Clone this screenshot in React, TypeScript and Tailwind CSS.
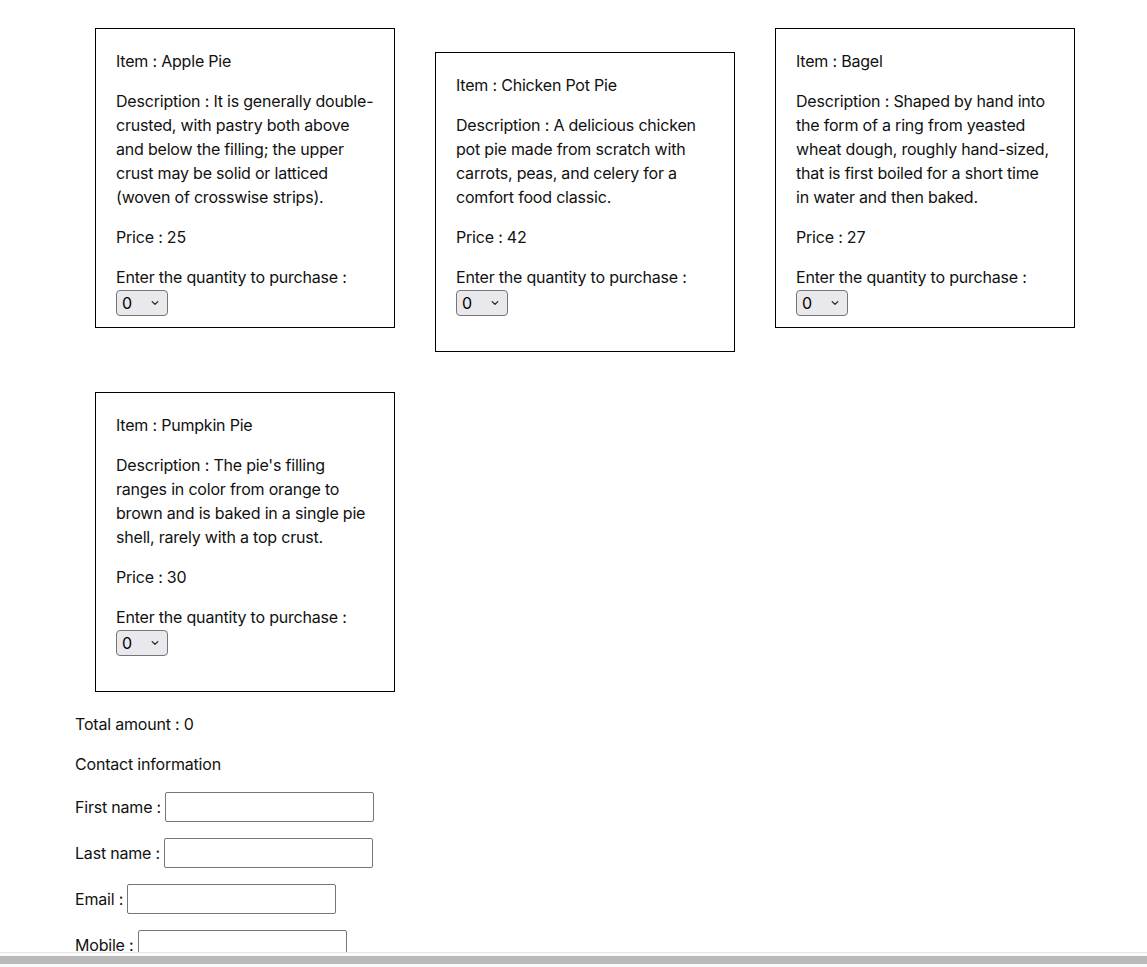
import React from "react";

const items = [
  {
    name: "Apple Pie",
    desc: "It is generally double-crusted, with pastry both above and below the filling; the upper crust may be solid or latticed (woven of crosswise strips).",
    price: 25,
  },
  {
    name: "Chicken Pot Pie",
    desc: "A delicious chicken pot pie made from scratch with carrots, peas, and celery for a comfort food classic.",
    price: 42,
  },
  {
    name: "Bagel",
    desc: "Shaped by hand into the form of a ring from yeasted wheat dough, roughly hand-sized, that is first boiled for a short time in water and then baked.",
    price: 27,
  },
  {
    name: "Pumpkin Pie",
    desc: "The pie's filling ranges in color from orange to brown and is baked in a single pie shell, rarely with a top crust.",
    price: 30,
  },
];

function Select() {
  return (
    <span className="inline-flex items-center justify-between w-[52px] h-[26px] align-middle border border-[#767676] rounded-[4px] bg-[#e9e9ed] pl-[5px] pr-[8px] text-[16px] leading-[24px] text-black">
      <span>0</span>
      <svg width="8" height="6" viewBox="0 0 8 6" fill="none">
        <path d="M1.2 1.6 L4 4.4 L6.8 1.6" stroke="#222" strokeWidth="1.3" strokeLinecap="round" strokeLinejoin="round" />
      </svg>
    </span>
  );
}

function Card({ name, desc, price }: { name: string; desc: string; price: number }) {
  return (
    <div className="inline-block align-baseline box-border w-[300px] h-[300px] m-5 border border-black p-5">
      <p className="mb-4">Item : {name}</p>
      <p className="mb-4">Description : {desc}</p>
      <p className="mb-4">Price : {price}</p>
      <div>
        Enter the quantity to purchase : <Select />
      </div>
    </div>
  );
}

function Row({ label, width }: { label: string; width: number }) {
  return (
    <div className="mt-4 flex items-center h-[30px]">
      <span>{label} :&nbsp;</span>
      <input
        type="text"
        style={{ width }}
        className="box-border h-[30px] border border-[#767676] rounded-[2px] bg-white"
      />
    </div>
  );
}

export default function App() {
  return (
    <div
      className="min-h-screen bg-white text-[#111] text-[16px] leading-[24px] tracking-[-0.2px] overflow-hidden"
      style={{ fontFamily: "Inter, 'Noto Sans', sans-serif" }}
    >
      <div className="pl-[75px] pt-2 pb-10">
        <div>
          {items.map((it) => (
            <Card key={it.name} {...it} />
          ))}
        </div>
        <div>
          <div>Total amount : 0</div>
          <div className="mt-4">Contact information</div>
          <Row label="First name" width={209} />
          <Row label="Last name" width={209} />
          <Row label="Email" width={209} />
          <Row label="Mobile" width={209} />
        </div>
        <div className="h-[200px]" />
      </div>
      <div className="fixed bottom-0 left-0 right-0 h-[15px] border-t border-[#e6e6e6] bg-[#fafafa] pt-[3px]">
        <div className="h-[8px] bg-[#bababa]" />
      </div>
    </div>
  );
}
